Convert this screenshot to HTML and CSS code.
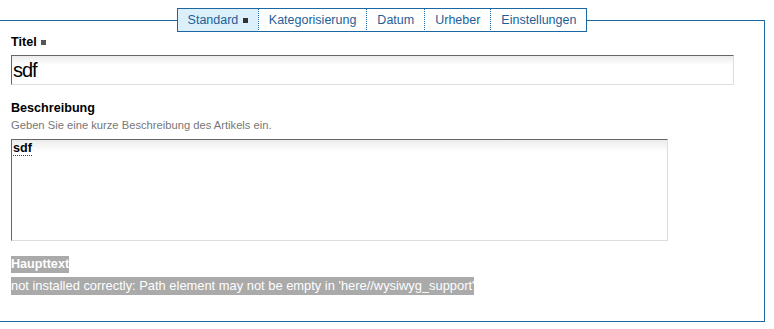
FILE: index.html
```html
<!DOCTYPE html>
<html lang="de">
<head>
    <meta charset="UTF-8">
    <title>Artikel bearbeiten</title>
    <link rel="stylesheet" href="styles.css">
</head>
<body>
    <div class="edit-form">
        <ul class="form-tabs">
            <li class="tab selected">Standard <span class="required-mark"></span></li>
            <li class="tab">Kategorisierung</li>
            <li class="tab">Datum</li>
            <li class="tab">Urheber</li>
            <li class="tab">Einstellungen</li>
        </ul>
        <div class="form-panel">
            <div class="field">
                <label class="field-label">Titel <span class="required-mark grey"></span></label>
                <div class="text-input">sdf</div>
            </div>
            <div class="field">
                <label class="field-label">Beschreibung</label>
                <div class="field-help">Geben Sie eine kurze Beschreibung des Artikels ein.</div>
                <div class="text-area"><span class="misspelled">sdf</span></div>
            </div>
            <div class="field error-field">
                <div class="error-label">Haupttext</div>
                <div class="error-text">not installed correctly: Path element may not be empty in 'here//wysiwyg_support'</div>
            </div>
        </div>
    </div>
</body>
</html>
```

FILE: styles.css
```css
body {
    margin: 0;
    font-family: "Liberation Sans", Arial, sans-serif;
    background: #fff;
    color: #000;
}
.edit-form {
    width: 766px;
    margin-left: -1px;
    padding-top: 8px;
}
.form-tabs {
    display: flex;
    justify-content: center;
    list-style: none;
    margin: 0 0 -12px 0;
    padding: 0;
    position: relative;
    z-index: 1;
}
.tab {
    height: 22px;
    line-height: 22px;
    padding: 0 10px;
    font-size: 12.5px;
    color: #1d5f97;
    background: #fff;
    border-top: 1px solid #1a67a3;
    border-bottom: 1px solid #1a67a3;
    border-left: 1px dotted #1a67a3;
}
.tab:first-child {
    border-left: 1px solid #1a67a3;
}
.tab:last-child {
    border-right: 1px solid #1a67a3;
}
.tab.selected {
    background: #dcf0fb;
}
.required-mark {
    display: inline-block;
    width: 5px;
    height: 5px;
    background: #333;
    margin-left: 1px;
    vertical-align: 1px;
}
.required-mark.grey {
    background: #555;
}
.form-panel {
    border: 1px solid #1a67a3;
    height: 287px;
    padding: 13px 11px 0 11px;
    box-sizing: content-box;
}
.field-label {
    display: block;
    font-size: 12.6px;
    font-weight: bold;
    line-height: 16px;
}
.text-input {
    width: 720px;
    height: 28px;
    margin-top: 5px;
    border: 1px solid #ddd;
    border-top-color: #666;
    border-left-color: #666;
    background: linear-gradient(#ececec, #fff 9px);
    font-size: 20px;
    letter-spacing: -1px;
    line-height: 28px;
    padding-left: 1px;
    box-sizing: content-box;
}
.field {
    margin-bottom: 15px;
}
.field-help {
    font-size: 11.2px;
    color: #777;
    line-height: 14px;
    margin-top: 2px;
}
.text-area {
    width: 653px;
    height: 98px;
    margin-top: 7px;
    padding: 1px;
    border: 1px solid #ddd;
    border-top-color: #666;
    border-left-color: #666;
    background: linear-gradient(#ececec, #fff 12px);
    font-size: 12.6px;
    font-weight: bold;
    line-height: 15px;
}
.misspelled {
    border-bottom: 1px dotted #c00;
}
.error-label {
    width: fit-content;
    background: #aaa;
    color: #fff;
    font-size: 12.6px;
    font-weight: bold;
    line-height: 17px;
}
.error-text {
    width: fit-content;
    margin-top: 4px;
    background: #aaa;
    color: #fff;
    font-size: 12.9px;
    line-height: 18px;
}
```
